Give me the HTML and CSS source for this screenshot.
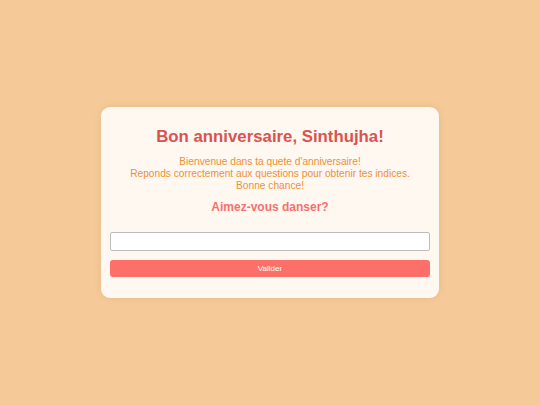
FILE: index.html
```html
<!DOCTYPE html>
<html lang="fr">
<head>
<meta charset="utf-8">
<title>Bon anniversaire</title>
<link rel="stylesheet" href="styles.css">
</head>
<body>
<div class="card">
  <h1 class="title">Bon anniversaire, Sinthujha!</h1>
  <p class="intro">Bienvenue dans ta quete d'anniversaire!<br>Reponds correctement aux questions pour obtenir tes indices.<br>Bonne chance!</p>
  <h2 class="question">Aimez-vous danser?</h2>
  <input class="answer" type="text">
  <button class="submit" type="button">Valider</button>
</div>
</body>
</html>
```
FILE: styles.css
```css
html, body {
  margin: 0;
  height: 100%;
}
body {
  background: #f6ca98;
  font-family: "Liberation Sans", Arial, sans-serif;
  display: flex;
  align-items: center;
  justify-content: center;
}
.card {
  width: 338px;
  box-sizing: border-box;
  background: #fff8f1;
  border-radius: 9px;
  padding: 20px 9px 21px;
  box-shadow: 0 0 8px rgba(0, 0, 0, 0.08);
  display: flex;
  flex-direction: column;
  text-align: center;
}
.title {
  margin: 0;
  font-size: 16.8px;
  line-height: 19.3px;
  font-weight: bold;
  color: #d9534f;
}
.intro {
  margin: 10px 0 0;
  font-size: 10.2px;
  line-height: 11.8px;
  color: #ee8f36;
}
.question {
  margin: 9px 0 0;
  font-size: 12px;
  line-height: 13.8px;
  font-weight: bold;
  color: #f7706c;
}
.answer {
  margin: 17.6px 0 0;
  height: 19px;
  box-sizing: border-box;
  border: 1px solid #bdbdbd;
  border-radius: 2px;
  background: #fff;
  padding: 0 4px;
  font-size: 10px;
  font-family: inherit;
}
.submit {
  margin: 9px 0 0;
  height: 17px;
  border: none;
  border-radius: 3px;
  background: #ff6f69;
  color: #fff;
  font-family: inherit;
  font-size: 8px;
  padding: 0;
}
```
